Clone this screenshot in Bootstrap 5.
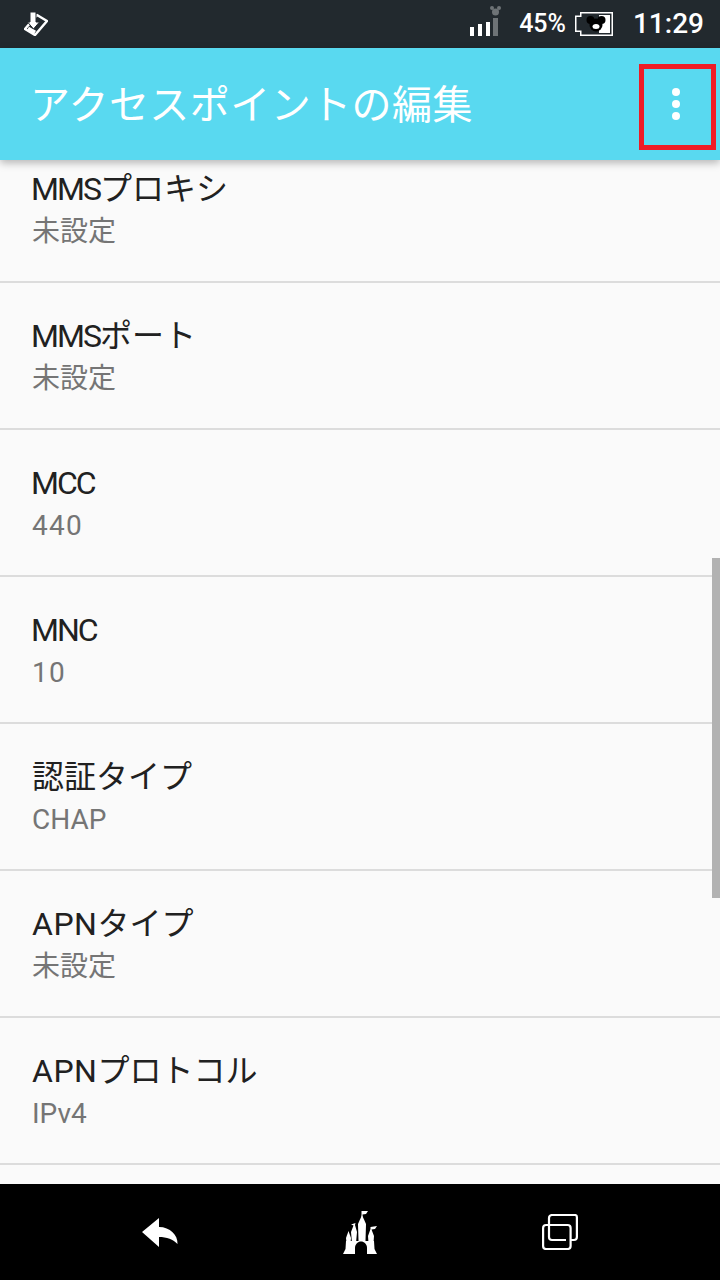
<!DOCTYPE html>
<html lang="ja">
<head>
  <meta charset="UTF-8">
  <title>アクセスポイントの編集</title>
  <link href="https://cdn.jsdelivr.net/npm/bootstrap@5.3.0/dist/css/bootstrap.min.css" rel="stylesheet">
  <style>
    html, body { height: 100%; }
    body {
        width: 720px;
        height: 1280px;
        overflow: hidden;
        background: #fafafa;
        font-family: Roboto, "Noto Sans CJK JP", sans-serif;
    }
    .status-strip {
        height: 48px;
        background: #22292e;
        color: #fff;
        padding: 0 16px 0 24px;
    }
    .status-pct { font-size: 25px; font-weight: 500; margin-left: 17px; margin-right: 9px; }
    .status-clock { font-size: 28px; font-weight: 500; margin-left: 20px; }
    .app-strip {
        height: 112px;
        background: #59d9f0;
        color: #fff;
        padding-left: 30px;
        position: relative;
        z-index: 2;
        box-shadow: 0 3px 8px rgba(0, 0, 0, .28);
    }
    .app-title { font-size: 40px; line-height: 1; margin: 4px 0 0; font-weight: 400; letter-spacing: .45px; }
    .more-box {
        position: absolute;
        left: 639px;
        top: 16px;
        width: 77px;
        height: 86px;
        border: 5px solid #ee1c25;
        padding: 0 3px 6px 0;
    }
    .more-dot { width: 8px; height: 8px; background: #fff; border-radius: 50%; }
    .pref-area { height: 1024px; overflow: hidden; position: relative; }
    .pref-list { margin-top: -24px; border-radius: 0; }
    .pref-row {
        height: 147px;
        padding: 33px 32px 0;
        background: transparent;
        border: 0;
        border-bottom: 2px solid #dcdcdc;
    }
    .pref-name { font-size: 32px; line-height: 40px; color: #212121; }
    .pref-latin { letter-spacing: -2px; margin-left: -1px; }
    .pref-apn { letter-spacing: .5px; }
    .pref-value { font-size: 28px; line-height: 36px; color: #757575; margin-top: 5px; }
    .pref-digits { letter-spacing: 1.300px; }
    .scroll-thumb {
        position: absolute;
        right: 0;
        top: 398px;
        width: 8px;
        height: 340px;
        background: #b2b2b2;
    }
    .nav-strip { height: 96px; background: #000; }
    .nav-slot { width: 200px; }
  </style>
</head>
<body>
<div class="status-strip d-flex align-items-center">
  <svg width="24" height="24" viewBox="0 0 24 24" class="me-auto">
    <path d="M13 3l10 6-12 14-10-6z" fill="#22292e" stroke="#fff" stroke-width="2.500" stroke-linejoin="round"/>
    <path d="M4 16.500l7 4" stroke="#fff" stroke-width="4"/>
    <path d="M6 0h6v10h3.500L9.500 17 3.500 10H6z" fill="#fff" stroke="#22292e" stroke-width="1"/>
  </svg>
  <svg width="32" height="40" viewBox="0 0 32 40">
    <rect x="0" y="23" width="4" height="9" fill="#fff"/>
    <rect x="8" y="20" width="4" height="12" fill="#fff"/>
    <rect x="16" y="18" width="4" height="14" fill="#fff"/>
    <rect x="23" y="14" width="5" height="18" fill="#6e7376"/>
    <circle cx="25.500" cy="8" r="3.500" fill="#6e7376"/>
    <circle cx="22" cy="4" r="2" fill="#6e7376"/>
    <circle cx="29" cy="4" r="2" fill="#6e7376"/>
  </svg>
  <span class="status-pct">45%</span>
  <svg width="38" height="24" viewBox="0 0 38 24">
    <path d="M37.250.750H5.750v3.500H.750v15h5v4h31.500z" fill="none" stroke="#fff" stroke-width="1.500"/>
    <rect x="24" y="3" width="11" height="18" fill="#fff"/>
    <circle cx="21" cy="13" r="6.500" fill="#000"/>
    <circle cx="15.500" cy="8" r="4" fill="#000"/>
    <circle cx="26.500" cy="8" r="4" fill="#000"/>
    <ellipse cx="21" cy="14.500" rx="3.500" ry="2.500" fill="#fff"/>
  </svg>
  <span class="status-clock">11:29</span>
</div>

<div class="app-strip d-flex align-items-center">
  <h1 class="app-title">アクセスポイントの編集</h1>
  <div class="more-box d-flex flex-column align-items-center justify-content-center gap-1">
    <div class="more-dot"></div>
    <div class="more-dot"></div>
    <div class="more-dot"></div>
  </div>
</div>

<div class="pref-area">
  <div class="list-group pref-list">
    <div class="list-group-item pref-row"><div class="pref-name"><span class="pref-latin">MMS</span>プロキシ</div><div class="pref-value">未設定</div></div>
    <div class="list-group-item pref-row"><div class="pref-name"><span class="pref-latin">MMS</span>ポート</div><div class="pref-value">未設定</div></div>
    <div class="list-group-item pref-row"><div class="pref-name"><span class="pref-latin">MCC</span></div><div class="pref-value"><span class="pref-digits">440</span></div></div>
    <div class="list-group-item pref-row"><div class="pref-name"><span class="pref-latin">MNC</span></div><div class="pref-value"><span class="pref-digits">10</span></div></div>
    <div class="list-group-item pref-row"><div class="pref-name">認証タイプ</div><div class="pref-value">CHAP</div></div>
    <div class="list-group-item pref-row"><div class="pref-name"><span class="pref-apn">APN</span>タイプ</div><div class="pref-value">未設定</div></div>
    <div class="list-group-item pref-row"><div class="pref-name"><span class="pref-apn">APN</span>プロトコル</div><div class="pref-value">IPv4</div></div>
  </div>
  <div class="scroll-thumb"></div>
</div>

<div class="nav-strip d-flex align-items-center justify-content-center">
  <div class="nav-slot d-flex justify-content-center">
    <svg width="36" height="29" viewBox="0 0 36 29">
      <path d="M0 14L17 0v9c11 0 19 8 18.500 17-4-4.500-11-7-18.500-7v10z" fill="#fff"/>
    </svg>
  </div>
  <div class="nav-slot d-flex justify-content-center">
    <svg width="34" height="43" viewBox="0 0 34 43" fill="#fff">
      <polygon points="18.500,0 25,0 23,3 19.500,3.500 19.500,6 18.500,6"/>
      <polygon points="19,4 23,13 22.500,30 15.500,30 15,13"/>
      <polygon points="8,13.500 12.500,12 12,14 14,21 13,32 9,32 8,21 10.500,14.500"/>
      <polygon points="5.500,20 8,27 7.500,32 3.500,32 3,27"/>
      <polygon points="27.500,16 34,15 32,18 28.500,18.500 31,25 30.500,32 25.500,32 25,25 27.500,18"/>
      <polygon points="3,30 31,30 31.500,38 34,43 0,43 2.500,38"/>
      <path fill="#000" d="M12 43v-6c0-4 3-6.500 6-6.500s6 2.500 6 6.500v6z"/>
    </svg>
  </div>
  <div class="nav-slot d-flex justify-content-center">
    <svg width="36" height="36" viewBox="0 0 36 36" fill="none" stroke="#fff" stroke-width="2.200">
      <rect x="1.100" y="11" width="27.500" height="24" rx="3"/>
      <path d="M7 10V4a3 3 0 0 1 3-3h22.900a2 2 0 0 1 2 2v20a3 3 0 0 1-3 3h-3.500"/>
      <path d="M7 10v13a3 3 0 0 0 3 3h14"/>
    </svg>
  </div>
</div>
</body>
</html>
